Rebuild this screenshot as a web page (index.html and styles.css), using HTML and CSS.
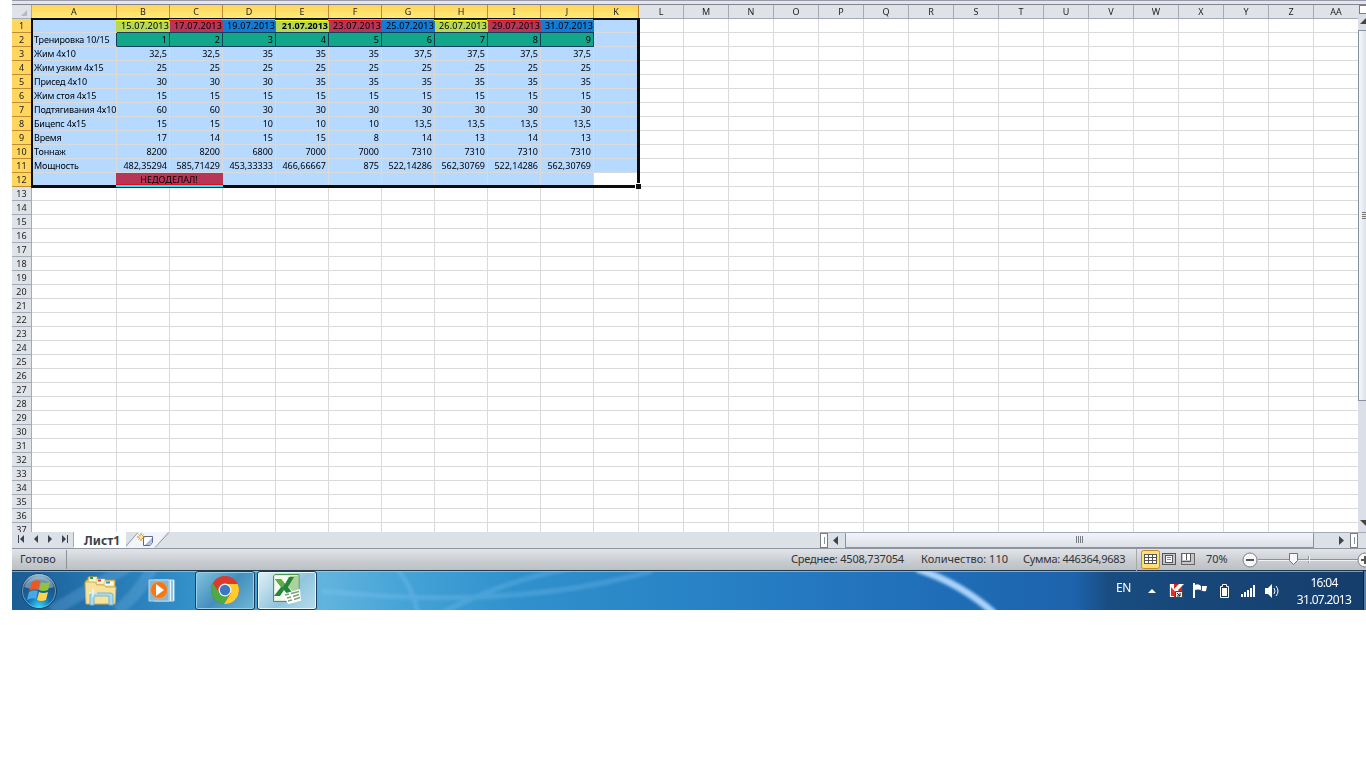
FILE: index.html
```html
<!DOCTYPE html>
<html lang="ru">
<head>
    <meta charset="UTF-8">
    <title>Лист1</title>
    <link rel="stylesheet" href="styles.css">
</head>
<body>
    <div class="screen">
        <div class="top-strip"></div>

        <!-- Worksheet -->
        <div class="workspace">
            <div class="sheet">
                <table id="grid" class="grid"></table>
                <div class="selection">
                    <div class="marks">
                        <i class="lime"></i><i class="red"></i><i class="blue"></i><i class="lime"></i><i class="red"></i><i class="blue"></i><i class="lime"></i><i class="red"></i><i class="blue"></i>
                    </div>
                    <div class="merged-mark"></div>
                    <div class="handle"></div>
                </div>
            </div>
            <div class="vscroll">
                <div class="vsplit"></div>
                <div class="vbutton"><svg width="16" height="14"><path d="M2 10L8 4l6 6z" fill="#444"/></svg></div>
                <div class="vthumb"><svg width="8" height="8"><path d="M3 .5h5M3 2.5h5M3 4.5h5M3 6.5h5" stroke="#777"/></svg></div>
                <div class="vbutton down"><svg width="16" height="14"><path d="M2 4h12L8 10z" fill="#444"/></svg></div>
            </div>
        </div>

        <!-- Sheet tabs and horizontal scroll -->
        <div class="tabbar">
            <svg class="nav" width="62" height="16" fill="#3c4450">
                <path d="M6 3h1v8H6zM12 3v8L8 7zM26 3v8L22 7zM36 3v8l4-4zM50 3v8l4-4zM55 3h1v8h-1z"/>
                <path d="M61.500 0v15" stroke="#a4abb6"/>
            </svg>
            <div class="tab">Лист1</div>
            <svg class="new-tab" width="48" height="17">
                <path d="M0 16h27c4 0 4-3 6-6l8-10H12Z" fill="#f1f4f8"/>
                <path d="M0 14L12 .5M29 15.5L43 .5" fill="none" stroke="#929aa6"/>
                <path d="M17.500 4.500h9v6l-2.500 3h-6.500z" fill="#fff" stroke="#596a98"/>
                <path d="M19 13l7-7v4l-3 3z" fill="#aeb9df"/>
                <path d="M15 1v8M11 5h8M12.500 2.500l5 5M17.500 2.500l-5 5" stroke="#c58220"/>
                <circle cx="15" cy="5" r="2" fill="#ffe18c"/>
            </svg>
            <div class="hscroll">
                <div class="hsplit"></div>
                <svg width="17" height="15"><path d="M10 3v9L5 7.500z" fill="#3e444c"/></svg>
                <div class="hthumb"><svg width="8" height="8"><path d="M.5 0v7M2.500 0v7M4.500 0v7M6.500 0v7" stroke="#777c84"/></svg></div>
                <svg width="36" height="15"><path d="M25 3v9l5-4.500z" fill="#3e444c"/></svg>
                <div class="hsplit"></div>
            </div>
        </div>

        <!-- Status bar -->
        <div class="statusbar">
            <span class="ready">Готово</span>
            <span class="average">Среднее: 4508,737054</span>
            <span class="count">Количество: 110</span>
            <span class="sum">Сумма: 446364,9683</span>
            <div class="views">
                <svg width="19" height="19">
                    <rect x=".5" y=".5" width="18" height="18" rx="2" fill="#ffdf76" stroke="#c18a2a"/>
                    <rect x="3.500" y="4.500" width="12" height="9" fill="#fff" stroke="#555"/>
                    <path d="M4 7.500h11M4 10.500h11M7.500 5v8M11.500 5v8" stroke="#555"/>
                </svg>
                <svg width="19" height="19">
                    <rect x="2.500" y="3.500" width="13" height="11" fill="#c4c6ca" stroke="#555"/>
                    <rect x="5.500" y="5.500" width="7" height="7" fill="#fff" stroke="#555"/>
                    <path d="M7 7.500h4M7 9.500h4" stroke="#888"/>
                </svg>
                <svg width="19" height="19">
                    <rect x="2.500" y="3.500" width="13" height="11" fill="#c4c6ca" stroke="#666"/>
                    <path d="M4 4h3v6H4zM8 4h3v6H8z" fill="#fff"/>
                    <path d="M7.500 4v6M11.500 4v7.500H3" fill="none" stroke="#555"/>
                </svg>
            </div>
            <span class="zoom">70%</span>
            <svg class="zoom-slider" width="125" height="20">
                <path d="M17 9.500h101M67.500 6v7" stroke="#8a929c"/>
                <path d="M17 10.500h101M68.500 6v7" stroke="#eef0f2"/>
                <circle cx="9" cy="10" r="7" fill="#f7f7f8" stroke="#7b7f86"/>
                <path d="M5 10h8" stroke="#555" stroke-width="2"/>
                <path d="M48.500 3.500h8v7l-4 4-4-4z" fill="#f6f7f9" stroke="#6b737e"/>
                <circle cx="124" cy="10" r="7" fill="#f7f7f8" stroke="#7b7f86"/>
                <path d="M120 10h8M124 6v8" stroke="#555" stroke-width="2"/>
            </svg>
        </div>

        <!-- Windows taskbar -->
        <div class="taskbar">
            <svg class="wallpaper" width="1354" height="39">
                <defs>
                    <linearGradient id="sky">
                        <stop offset="0" stop-color="#1b5c93"/>
                        <stop offset=".06" stop-color="#2474b0"/>
                        <stop offset=".14" stop-color="#3594cb"/>
                        <stop offset=".23" stop-color="#62b4dd"/>
                        <stop offset=".29" stop-color="#45a3d7"/>
                        <stop offset=".37" stop-color="#3091cc"/>
                        <stop offset=".5" stop-color="#2983c6"/>
                        <stop offset=".65" stop-color="#2171bb"/>
                        <stop offset=".785" stop-color="#1d63ac"/>
                        <stop offset=".81" stop-color="#194c80"/>
                        <stop offset="1" stop-color="#153d6b"/>
                    </linearGradient>
                    <filter id="soft" x="-20%" y="-50%" width="140%" height="200%"><feGaussianBlur stdDeviation="1.600"/></filter>
                </defs>
                <rect width="1354" height="39" fill="url(#sky)"/>
                <g fill="none" filter="url(#soft)" stroke="#9bd0ff">
                    <path d="M905-2Q948 12 982 42" stroke="#a9d3fb" stroke-width="7"/>
                    <path d="M430 42Q490 10 560-3M310 20Q500 40 640 0M385-2Q401 17 406 42" stroke-width="5" opacity=".22"/>
                    <path d="M40 40L115-4M105 40Q130 20 140-4" stroke-width="12" opacity=".2"/>
                </g>
                <path d="M0 .5h1354" stroke="#a9d4ee" opacity=".65"/>
            </svg>
            <div class="launchers">
                <svg class="start" width="40" height="38" viewBox="0 0 40 38">
                    <defs><radialGradient id="orb" cx=".5" cy=".95" r=".9"><stop offset="0" stop-color="#35d5ff"/><stop offset=".4" stop-color="#116bab"/><stop offset=".8" stop-color="#235179"/><stop offset="1" stop-color="#94b6cd"/></radialGradient></defs>
                    <circle cx="20" cy="19" r="17.500" fill="url(#orb)" stroke="#174466"/>
                    <circle cx="20" cy="19" r="16.500" fill="none" stroke="#9cc3da" opacity=".6"/>
                    <path d="M5 15a16 16 0 0 1 30 0q-15 5-30 0" fill="#d8eaf5" opacity=".4"/>
                    <path d="M13 10q4-3 8-1l-2 9q-4-2-9 1z" fill="#ee5723"/>
                    <path d="M22 10q4 2 9 0l-2 8q-5 2-9 0z" fill="#8fc43c"/>
                    <path d="M10 20q4-3 9-1l-2 8q-4-2-9 1z" fill="#46a8e8"/>
                    <path d="M20 20q4 2 9 0l-2 8q-5 2-9 0z" fill="#ffd34b"/>
                </svg>
                <svg class="folder" width="34" height="31" viewBox="0 0 34 31">
                    <path d="M2 5h2V2h9v3h18v19H2z" fill="#f3d98a" stroke="#b89235"/>
                    <path d="M5 2h8v6H5zM12 4h9v5h-9zM20 6h10v5H20z" fill="#fff9e0" stroke="#d5b65f" stroke-width=".5"/>
                    <path d="M6 2h3v2H6z" fill="#18a83d"/><path d="M14 4.500h3v2h-3z" fill="#d83b2a"/><path d="M22 6.500h4v2h-4z" fill="#318bd0"/>
                    <path d="M1 7h10l2 3h7l2 2h10l-1 17H2z" fill="#f8e29a" stroke="#d0ac4f"/>
                    <path d="M6 29V20q0-2 3-2h17q3 0 3 2v10h-4v-9H10v9H6z" fill="#a9dcf1" stroke="#75b5d2"/>
                    <path d="M9 13v9M5 18h8" stroke="#fff"/>
                </svg>
                <svg class="player" width="28" height="27" viewBox="0 0 28 27">
                    <path d="M6 3h20v21H6z" fill="#8fc5e4" stroke="#c6e3f3"/>
                    <path d="M1 3h20v21H1z" fill="#82b9da" stroke="#b5d9ec"/>
                    <path d="M22.500 3v21M25.500 3v20" stroke="#e5f5ff"/>
                    <circle cx="11" cy="13" r="8.500" fill="#f07818" stroke="#e9a35f"/>
                    <path d="M8 7l8 6-8 6z" fill="#fff"/>
                </svg>
                <div class="task">
                    <svg width="30" height="30" viewBox="0 0 30 30">
                        <circle cx="15" cy="15" r="14" fill="#dc3a2c"/>
                        <path d="M2.900 8A14 14 0 0 0 14 29l6-10.500-5-3-5.500 3z" fill="#4cab45"/>
                        <path d="M15 9h12.600A14 14 0 0 1 14 29l7-11z" fill="#fccd2c"/>
                        <circle cx="15" cy="15" r="6.500" fill="#f4f4f4"/>
                        <circle cx="15" cy="15" r="5.200" fill="#3a78c2"/>
                    </svg>
                </div>
                <div class="task active">
                    <svg width="32" height="32" viewBox="0 0 32 32">
                        <path d="M5 1.500h24v27H3.500V3z" fill="#dcecd5" stroke="#4c974f"/>
                        <path d="M5 3h23v24H5z" fill="#f5faf1"/>
                        <path d="M20 3h8v15h-6l-4-5z" fill="#a9d39a"/>
                        <path d="M5 6h6l4 5 4-7h5l-6 10 6 8h-6l-4-5-4 6H4l7-9z" fill="#25853a"/>
                        <path d="M5 6h6l4 5-3 4z" fill="#5eae45"/>
                        <path d="M13 21l17-5 1 12-13 3z" fill="#fff"/>
                        <path d="M15 22l4-1m2-.5l8-2M17 25l4-1m2-.5l6-2M18 28l4-1m2-.5l6-2" stroke="#78a27c" stroke-width="1.500"/>
                    </svg>
                </div>
            </div>
            <span class="lang">EN</span>
            <svg class="tray" width="142" height="22">
                <path d="M4 13h8L8 9z" fill="#fff"/>
                <path d="M25 4h13v13H25z" fill="#d9231d"/>
                <path d="M26 4h4v5l5-5h5l-6 6 5 7h-5l-4-5v5h-4z" fill="#fff"/>
                <path d="M27 7v9h8z" fill="#e23029"/>
                <path d="M31.500 11.500h7v6h-7z" fill="#eee" stroke="#444"/><path d="M33 13l3 3m0-3v3h-3" fill="none" stroke="#222"/>
                <path d="M50 3v15" stroke="#fff" stroke-width="2"/>
                <path d="M51 5q3-2 6 1h6l-1 5q-3 1-5-1-3-1-6 0z" fill="#fff"/><path d="M57.500 6v4" stroke="#355"/>
                <path d="M78.500 4.500h4v2h2v11h-8v-11h2z" fill="#183855" stroke="#fff"/><path d="M78 8h5v8h-5z" fill="#fff"/>
                <path d="M97 14h2v3h-2zM100 12h2v5h-2zM103 10h2v7h-2zM106 8h2v9h-2zM109 5h2v12h-2z" fill="#fff"/>
                <path d="M121 8h3l4-4v14l-4-4h-3z" fill="#fff"/>
                <path d="M130 8q2 3 0 6M132 6q4 5 0 10" fill="none" stroke="#fff"/>
            </svg>
            <div class="clock">16:04<br>31.07.2013</div>
            <div class="show-desktop"></div>
        </div>
    </div>

    <script src="script.js"></script>
</body>
</html>
```
FILE: styles.css
```css
/* General */
body {
    margin: 0;
    background-color: #fff;
    font-family: "Noto Sans", "Open Sans", sans-serif;
    overflow: hidden;
}

svg {
    display: block;
    flex-shrink: 0;
}

.screen {
    width: 1354px;
    height: 610px;
    margin-left: 12px;
    overflow: hidden;
}

.top-strip {
    box-sizing: border-box;
    height: 5px;
    border-top: 1px solid #999ba9;
    border-bottom: 1px solid #83848e;
    background-color: #e4e5ef;
}

/* Worksheet */
.workspace {
    display: flex;
    height: 527px;
}

.sheet {
    position: relative;
    width: 1346px;
    overflow: hidden;
}

.grid {
    width: 1347px;
    table-layout: fixed;
    border-collapse: separate;
    border-spacing: 0;
    font-size: 9px;
    line-height: 12px;
    color: #000;
}

.grid th,
.grid td {
    box-sizing: border-box;
    height: 14px;
    padding: 1px 2px 0 0;
    border-right: 1px solid #dadada;
    border-bottom: 1px solid #dadada;
    white-space: nowrap;
}

.grid th {
    padding: 1px 0 0;
    background-color: #dfe3e8;
    border-color: #a3abb7;
    color: #222;
    font-weight: normal;
    text-align: center;
}

.grid th.picked {
    background-color: #ffd65e;
    border-color: #c18c32;
}

.grid thead th.picked {
    background-image: linear-gradient(#ffd35c, #ffec75);
}

.grid td {
    text-align: right;
}

.grid td.name {
    padding-left: 2px;
    padding-right: 0;
    text-align: left;
    letter-spacing: -0.16px;
}

.grid td.selected {
    background-color: #b6d9ff;
}

.grid td.lime { background-color: #b7d957; }
.grid td.red { background-color: #b73556; }
.grid td.blue { background-color: #117bd5; }

.grid td.lime,
.grid td.red,
.grid td.blue {
    border-bottom-color: #163d5c;
    border-right-width: 0;
    padding-right: 1px;
    letter-spacing: 0.2px;
}

.grid td.bold {
    font-weight: bold;
    letter-spacing: 0;
}

.grid td.number {
    background-color: #12a68a;
    border-color: #163d5c;
}

.grid td.before-number { border-right-color: #163d5c; }
.grid td.before-lime { border-right-color: #b7d957; }
.grid td.before-note { border-right-color: #b73556; }

.grid td.note {
    background-color: #b73556;
    border-right: 0;
    text-align: center;
}

.corner-mark {
    width: 0;
    margin: 1px 4px 0 auto;
    border-left: 6px solid transparent;
    border-bottom: 6px solid #b6bbc3;
}

/* Frame lying over the selected range */
.selection {
    position: absolute;
    box-sizing: border-box;
    left: 19px;
    top: 13px;
    width: 609px;
    height: 170px;
    border: 3px solid #0b0d0d;
    border-top-width: 2px;
    border-left-width: 2px;
}

.marks {
    position: absolute;
    display: flex;
    left: 83px;
    top: -1px;
}

.marks i {
    box-sizing: border-box;
    width: 53px;
    height: 2px;
    border-top: 1px solid;
}

.marks .lime { border-color: #0b12b4; background-color: #f4ff00; }
.marks .red { border-color: #35dce5; background-color: #f90b16; }
.marks .blue { border-color: #55d7dc; background-color: #117bd5; }

.merged-mark {
    position: absolute;
    box-sizing: border-box;
    left: 83px;
    bottom: -2px;
    width: 107px;
    height: 3px;
    border-top: 1px solid #e30a25;
    background-color: #00f3fa;
}

.handle {
    position: absolute;
    right: -4px;
    bottom: -4px;
    width: 5px;
    height: 5px;
    border-left: 1px solid #fff;
    border-top: 1px solid #fff;
    background-color: #111;
}

/* Vertical scroll */
.vscroll {
    display: flex;
    flex-direction: column;
    width: 8px;
    overflow: hidden;
    background-color: #dbe0e8;
}

.vsplit {
    box-sizing: border-box;
    height: 9px;
    margin-left: 1px;
    border: 1px solid #777d86;
    border-right: 0;
    background-color: #fff;
}

.vbutton {
    height: 16px;
}

.vthumb {
    box-sizing: border-box;
    display: flex;
    align-items: center;
    height: 371px;
    border: 1px solid #87909c;
    border-right: 0;
    background: linear-gradient(to right, #f4f7fc, #dce1eb);
}

.vbutton.down {
    margin-top: auto;
}

/* Sheet tabs */
.tabbar {
    box-sizing: border-box;
    display: flex;
    height: 17px;
    border-bottom: 1px solid #9097a3;
    background-color: #dce1e8;
}

.tab {
    box-sizing: border-box;
    width: 52px;
    padding-left: 10px;
    background-color: #fff;
    color: #3b4148;
    font-size: 12px;
    font-weight: bold;
    line-height: 17px;
}

.hscroll {
    box-sizing: border-box;
    display: flex;
    width: 546px;
    margin-left: auto;
    border-top: 1px solid #a4abb6;
}

.hsplit {
    box-sizing: border-box;
    width: 8px;
    height: 15px;
    border: 1px solid #777e88;
    background: linear-gradient(#8c929b, #8c929b) center / 1px 7px no-repeat #fff;
}

.hthumb {
    box-sizing: border-box;
    display: flex;
    align-items: center;
    justify-content: center;
    width: 469px;
    height: 15px;
    border: 1px solid #8a929e;
    border-top: 0;
    border-radius: 1px;
    background: linear-gradient(#f2f4f9, #dce0e7);
}

/* Status bar */
.statusbar {
    box-sizing: border-box;
    display: flex;
    align-items: center;
    height: 22px;
    border-bottom: 1px solid #233950;
    background: linear-gradient(#e2e4e8, #c8ccd1 60%, #bbc0c3);
    color: #333;
    font-size: 11px;
    white-space: nowrap;
}

.ready {
    box-sizing: border-box;
    width: 55px;
    padding-left: 8px;
    border-right: 1px solid #8d9298;
    line-height: 17px;
}

.average {
    width: 130px;
    margin-left: 724px;
    letter-spacing: -0.2px;
}

.count {
    width: 102px;
}

.sum {
    box-sizing: border-box;
    width: 114px;
    border-right: 1px solid #a5a9ae;
    line-height: 20px;
    letter-spacing: -0.28px;
}

.ready,
.average,
.count,
.sum,
.zoom {
    padding-bottom: 2px;
}

.views {
    display: flex;
    margin-left: 4px;
}

.zoom {
    width: 35px;
    margin-left: 8px;
}

/* Taskbar */
.taskbar {
    position: relative;
    display: flex;
    height: 39px;
    color: #fff;
}

.wallpaper {
    position: absolute;
    left: 0;
    top: 0;
    z-index: -1;
}

.launchers {
    display: flex;
    align-items: center;
    width: 1104px;
}

.start {
    margin-left: 7px;
}

.folder {
    margin-left: 25px;
}

.player {
    margin: 0 19px 0 30px;
}

.task {
    box-sizing: border-box;
    display: flex;
    justify-content: center;
    width: 60px;
    height: 39px;
    margin-right: 2px;
    padding-top: 3px;
    border: 1px solid #173c5c;
    border-radius: 3px;
    box-shadow: inset 0 0 0 1px #9bd0e9;
    background: linear-gradient(135deg, #84c3df, #438fbd 50%, #6eb7d8);
}

.task.active {
    padding: 1px 3px 0 0;
    background: linear-gradient(135deg, #e2f1f7, #91c5dd 55%, #b5dcec);
    box-shadow: inset 0 0 0 1px #e8f8ff;
}

.lang {
    width: 23px;
    padding-top: 8px;
    font-size: 12px;
    line-height: 17px;
    letter-spacing: -0.4px;
}

.tray {
    margin: 9px 0 0 5px;
}

.clock {
    width: 76px;
    padding-top: 3px;
    font-size: 12px;
    line-height: 17px;
    text-align: center;
    letter-spacing: -0.7px;
}

.show-desktop {
    box-sizing: border-box;
    width: 3px;
    margin-left: auto;
    border-left: 1px solid #0b223c;
    background-color: #587ca0;
}
```
FILE: script.js
```js
const columns = ['A','B','C','D','E','F','G','H','I','J','K','L','M','N','O','P','Q','R','S','T','U','V','W','X','Y','Z','AA'];
const rowCount = 37;
const dayColors = ['lime', 'red', 'blue'];

const data = [
    ['', '15.07.2013', '17.07.2013', '19.07.2013', '21.07.2013', '23.07.2013', '25.07.2013', '26.07.2013', '29.07.2013', '31.07.2013'],
    ['Тренировка 10/15', '1', '2', '3', '4', '5', '6', '7', '8', '9'],
    ['Жим 4х10', '32,5', '32,5', '35', '35', '35', '37,5', '37,5', '37,5', '37,5'],
    ['Жим узким 4х15', '25', '25', '25', '25', '25', '25', '25', '25', '25'],
    ['Присед 4х10', '30', '30', '30', '35', '35', '35', '35', '35', '35'],
    ['Жим стоя 4х15', '15', '15', '15', '15', '15', '15', '15', '15', '15'],
    ['Подтягивания 4х10', '60', '60', '30', '30', '30', '30', '30', '30', '30'],
    ['Бицепс 4х15', '15', '15', '10', '10', '10', '13,5', '13,5', '13,5', '13,5'],
    ['Время', '17', '14', '15', '15', '8', '14', '13', '14', '13'],
    ['Тоннаж', '8200', '8200', '6800', '7000', '7000', '7310', '7310', '7310', '7310'],
    ['Мощность', '482,35294', '585,71429', '453,33333', '466,66667', '875', '522,14286', '562,30769', '522,14286', '562,30769'],
    ['', 'НЕДОДЕЛАЛ!']
];

function columnWidth(c) {
    if (c === 0) return 85;
    return c < 10 ? 53 : 45;
}

function cellClass(r, c) {
    const names = [];
    if (r < 12 && c < 11 && !(r === 11 && c === 10)) names.push('selected');
    if (c === 0) names.push('name');
    if (r === 0 && c > 0 && c < 10) names.push(dayColors[(c - 1) % 3]);
    if (r === 0 && c === 4) names.push('bold');
    if (r === 1 && c > 0 && c < 10) names.push('number');
    if (r === 0 && c === 0) names.push('before-lime');
    if (r === 1 && c === 0) names.push('before-number');
    if (r === 11 && c === 0) names.push('before-note');
    if (r === 11 && c === 1) names.push('note');
    return names.join(' ');
}

let html = '<colgroup><col style="width:20px">';
columns.forEach((name, c) => html += `<col style="width:${columnWidth(c)}px">`);
html += '</colgroup><thead><tr><th><div class="corner-mark"></div></th>';
columns.forEach((name, c) => html += `<th class="${c < 11 ? 'picked' : ''}">${name}</th>`);
html += '</tr></thead><tbody>';

for (let r = 0; r < rowCount; r++) {
    html += `<tr><th class="${r < 12 ? 'picked' : ''}">${r + 1}</th>`;
    for (let c = 0; c < columns.length; c++) {
        // B12 and C12 are merged
        if (r === 11 && c === 2) continue;
        const span = r === 11 && c === 1 ? ' colspan="2"' : '';
        const text = data[r] && data[r][c] ? data[r][c] : '';
        html += `<td class="${cellClass(r, c)}"${span}>${text}</td>`;
    }
    html += '</tr>';
}

document.getElementById('grid').innerHTML = html + '</tbody>';
```
